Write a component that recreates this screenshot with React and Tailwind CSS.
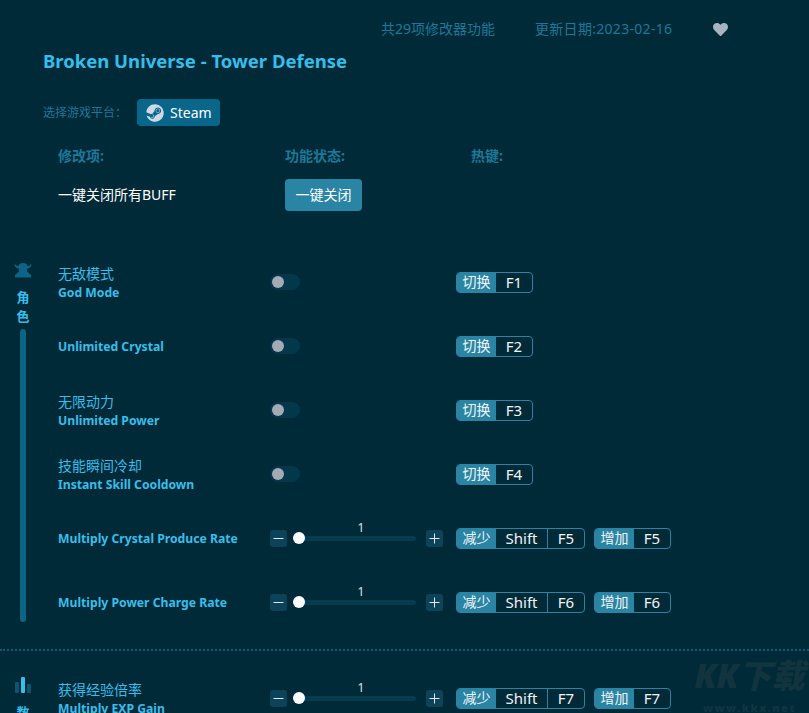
import React from 'react';
import { FaSteam, FaHeart } from 'react-icons/fa';

const rows1 = [
  { zh: '无敌模式', en: 'God Mode', type: 'toggle', key: 'F1' },
  { en: 'Unlimited Crystal', type: 'toggle', key: 'F2' },
  { zh: '无限动力', en: 'Unlimited Power', type: 'toggle', key: 'F3' },
  { zh: '技能瞬间冷却', en: 'Instant Skill Cooldown', type: 'toggle', key: 'F4' },
  { en: 'Multiply Crystal Produce Rate', type: 'slider', key: 'F5' },
  { en: 'Multiply Power Charge Rate', type: 'slider', key: 'F6' },
];

const Toggle = () => (
  <div className="w-[30px] h-4 rounded-full bg-[#03384c] flex items-center pl-0.5">
    <div className="w-3 h-3 rounded-full bg-[#a4aab2]" />
  </div>
);

const StepButton = ({ children }) => (
  <div className="w-[17px] h-[17px] rounded-[3px] bg-[#0c4358] flex items-center justify-center text-[#dfe7ea]">
    <svg width="11" height="11" viewBox="0 0 11 11" stroke="currentColor" strokeWidth="1">
      <path d="M0.5 5.5h10" />
      {children}
    </svg>
  </div>
);

const Slider = () => (
  <div className="flex items-center">
    <StepButton />
    <div className="relative w-[123px] h-[5px] rounded-full bg-[#053c50] ml-[6px] mr-[10px]">
      <div className="absolute left-0 top-[-4px] w-3 h-3 rounded-full bg-white" />
      <div className="absolute left-[68px] top-[-16px] -translate-x-1/2 text-xs leading-4 text-[#dfe7ea]">1</div>
    </div>
    <StepButton>
      <path d="M5.5 0.5v10" />
    </StepButton>
  </div>
);

const Hotkey = ({ label, keys }) => (
  <div className="flex h-[21px] rounded-[4px] border border-[#2a84a4] overflow-hidden text-[15px] leading-none text-[#f0f4f5]">
    <div className="w-[40px] -ml-px pl-px bg-[#2a84a4] flex items-center justify-center text-sm">{label}</div>
    {keys.map((k, i) => (
      <div
        key={k}
        className={i > 0
          ? 'w-[37px] border-l border-[#2a84a4] flex items-center justify-center'
          : keys.length > 1
            ? 'w-[51px] flex items-center justify-center'
            : 'w-[36px] flex items-center justify-center'}
      >
        {k}
      </div>
    ))}
  </div>
);

const Row = ({ zh, en, type, k }) => (
  <div className="flex items-center h-16">
    <div className="w-[212px] pt-[2px] font-bold text-[12.2px] leading-[18px] text-[#3abde8]">
      {zh && <div className="text-sm font-normal">{zh}</div>}
      <div>{en}</div>
    </div>
    <div className="w-[186px]">{type === 'toggle' ? <Toggle /> : <Slider />}</div>
    {type === 'toggle' ? (
      <Hotkey label="切换" keys={[k]} />
    ) : (
      <div className="flex gap-[9px]">
        <Hotkey label="减少" keys={['Shift', k]} />
        <Hotkey label="增加" keys={[k]} />
      </div>
    )}
  </div>
);

export default function App() {
  return (
    <div
      className="relative h-[713px] w-[809px] overflow-hidden bg-[#012a38]"
      style={{ fontFamily: '"Noto Sans", "Noto Sans CJK SC", sans-serif' }}
    >
      <div className="flex h-[49px] items-start pt-[20px] pl-[381px] text-sm leading-[18px] text-[#1f7797]">
        <span className="w-[154px]">共29项修改器功能</span>
        <span className="w-[178px] tracking-[0.3px]">更新日期:2023-02-16</span>
        <FaHeart className="mt-[2px] text-[15px] text-[#a6b5c0]" />
      </div>

      <h1 className="ml-[43px] h-6 text-[18.5px] leading-6 font-bold text-[#38bdea]">Broken Universe - Tower Defense</h1>

      <div className="ml-[43px] mt-[26px] flex h-[27px] items-center">
        <span className="w-[94px] text-xs text-[#1f7797]">选择游戏平台：</span>
        <div className="flex h-[27px] w-[83px] items-center gap-[6px] rounded-[4px] bg-[#07668a] pl-[9px] text-sm text-white">
          <FaSteam className="text-lg text-[#cdd9e5]" />
          Steam
        </div>
      </div>

      <div className="ml-[58px] mt-[21px] flex text-sm leading-[18px] font-bold text-[#1f7797]">
        <span className="w-[227px]">修改项:</span>
        <span className="w-[186px]">功能状态:</span>
        <span>热键:</span>
      </div>

      <div className="ml-[58px] mt-[14px] flex items-center">
        <span className="w-[227px] text-sm text-white">一键关闭所有BUFF</span>
        <div className="flex h-8 w-[77px] items-center justify-center rounded-[4px] bg-[#2a84a4] text-sm text-white">一键关闭</div>
      </div>

      <div className="mt-[39px] flex">
        <div className="ml-[14px] flex w-[44px] flex-col pt-[12px]">
          <svg width="18" height="18" viewBox="0 0 18 18" fill="#0c6486">
            <path d="M1 1c0 2 1.500 3 3.500 3 .5-2 2-3 4.500-3s4 1 4.500 3c2 0 3.500-1 3.500-3 1 3-.5 5-3.500 5.500l-.5 3 4 3.500v2.500H1v-2.500l4-3.500-.5-3C1.500 6 0 4 1 1z" />
          </svg>
          <div className="mt-[8px] w-[18px] text-center text-[13px] leading-[19px] font-bold text-[#38bdea]">
            <div>角</div>
            <div>色</div>
          </div>
          <div className="mt-[3px] ml-[6px] h-[293px] w-[6px] rounded-full bg-[#0c6486]" />
        </div>
        <div>
          {rows1.map((r) => (
            <Row key={r.en} zh={r.zh} en={r.en} type={r.type} k={r.key} />
          ))}
        </div>
      </div>

      <div className="mt-[15px] h-0 border-t-2 border-dotted border-[#0e5a75]" />

      <div className="mt-[15px] flex">
        <div className="ml-[14px] flex w-[44px] flex-col pt-[10px]">
          <svg width="18" height="18" viewBox="0 0 18 18">
            <rect x="1" y="6" width="4" height="11" rx="1" fill="#0c5570" />
            <rect x="7" y="1" width="4" height="16" rx="1" fill="#38bdea" />
            <rect x="13" y="8" width="4" height="9" rx="1" fill="#0c5570" />
          </svg>
          <div className="mt-[9px] w-[18px] text-center text-[13px] leading-[19px] font-bold text-[#38bdea]">数</div>
        </div>
        <Row zh="获得经验倍率" en="Multiply EXP Gain" type="slider" k="F7" />
      </div>

      <div className="absolute left-[692px] top-[654px] w-[115px] select-none text-center font-black text-[#12343f]">
        <div className="text-[33px] leading-[44px] italic">KK下载</div>
        <div className="mt-[4px] text-[11px] leading-[12px] tracking-[1.5px]">www.kkx.net</div>
      </div>
    </div>
  );
}
